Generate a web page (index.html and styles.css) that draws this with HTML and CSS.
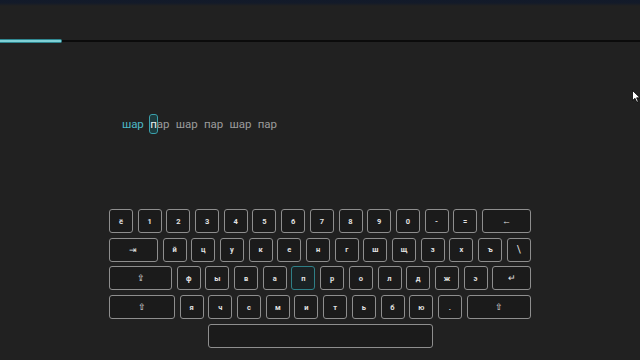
FILE: index.html
```html
<!DOCTYPE html>
<html lang="ru">
<head>
<meta charset="utf-8">
<title>Typing</title>
<link rel="stylesheet" href="styles.css">
</head>
<body>
<div class="app">
  <header class="topbar"></header>
  <div class="progress"><div class="progress-fill" style="width:62px"></div></div>
  <main class="stage">
    <div class="words">
      <span class="word done">шар</span>
      <span class="word"><span class="cur">п</span>ар</span>
      <span class="word">шар</span>
      <span class="word">пар</span>
      <span class="word">шар</span>
      <span class="word">пар</span>
    </div>
    <div class="keyboard">
      <div class="row">
        <div class="key">ё</div><div class="key">1</div><div class="key">2</div><div class="key">3</div><div class="key">4</div><div class="key">5</div><div class="key">6</div><div class="key">7</div><div class="key">8</div><div class="key">9</div><div class="key">0</div><div class="key">-</div><div class="key">=</div><div class="key k-back k-sym">←</div>
      </div>
      <div class="row">
        <div class="key k-tab k-sym">⇥</div><div class="key">й</div><div class="key">ц</div><div class="key">у</div><div class="key">к</div><div class="key">е</div><div class="key">н</div><div class="key">г</div><div class="key">ш</div><div class="key">щ</div><div class="key">з</div><div class="key">х</div><div class="key">ъ</div><div class="key k-slash">\</div>
      </div>
      <div class="row">
        <div class="key k-caps k-sym">⇪</div><div class="key">ф</div><div class="key">ы</div><div class="key">в</div><div class="key">а</div><div class="key active">п</div><div class="key">р</div><div class="key">о</div><div class="key">л</div><div class="key">д</div><div class="key">ж</div><div class="key">э</div><div class="key k-enter k-sym">↵</div>
      </div>
      <div class="row">
        <div class="key k-lshift k-sym">⇧</div><div class="key">я</div><div class="key">ч</div><div class="key">с</div><div class="key">м</div><div class="key">и</div><div class="key">т</div><div class="key">ь</div><div class="key">б</div><div class="key">ю</div><div class="key">.</div><div class="key k-rshift k-sym">⇧</div>
      </div>
      <div class="row row-space">
        <div class="key k-space"></div>
      </div>
    </div>
  </main>
  <svg class="pointer" width="9" height="13" viewBox="0 0 9 13"><path d="M0.5 0.5 L0.5 10.5 L3 8.3 L4.8 12.3 L6.3 11.6 L4.6 7.8 L8 7.8 Z" fill="#fff" stroke="#000" stroke-width="0.8"/></svg>
</div>
</body>
</html>
```
FILE: styles.css
```css
html, body {
  margin: 0;
  padding: 0;
  background: #212121;
}
.app {
  position: relative;
  width: 640px;
  height: 360px;
  overflow: hidden;
  font-family: Roboto, "Noto Sans", sans-serif;
}
.topbar {
  height: 40px;
  background: linear-gradient(to bottom, #121a2a 0px, #141b29 3px, #212121 6px, #212121 100%);
}
.progress {
  position: relative;
  height: 2px;
  background: #0b0b0b;
}
.progress-fill {
  position: absolute;
  left: 0;
  top: -1px;
  height: 4px;
  box-sizing: border-box;
  background: #7fd0d6;
  border: 1px solid #2f8790;
  border-left: none;
  border-radius: 0 2px 2px 0;
}
.stage {
  display: flex;
  flex-direction: column;
  align-items: center;
}
.words {
  align-self: flex-start;
  margin-left: 122px;
  margin-top: 74px;
  display: flex;
  gap: 6.5px;
  font-size: 11.5px;
  letter-spacing: -0.1px;
  line-height: 16px;
  color: #9c9c9c;
  height: 16px;
}
.word.done {
  color: #4db8c6;
}
.cur {
  display: inline-block;
  color: #f0f0f0;
  background: #1d3b3e;
  outline: 1px solid #3aa0ac;
  border-radius: 2px;
  padding: 1px 0;
  margin: -1px 0;
}
.keyboard {
  margin-top: 77px;
  width: 422px;
  display: flex;
  flex-direction: column;
  gap: 4.7px;
}
.row {
  display: flex;
  gap: 4.7px;
}
.row-space {
  justify-content: center;
}
.key {
  box-sizing: border-box;
  width: 24px;
  height: 24px;
  flex: none;
  border: 1.4px solid #8e8e8e;
  border-radius: 3px;
  background: #1b1b1b;
  color: #e2e2e2;
  font-size: 7.5px;
  font-weight: 700;
  display: flex;
  align-items: center;
  justify-content: center;
}
.key.active {
  border-color: #2f7f86;
  background: #1a2224;
}
.k-sym { font-size: 9px; font-weight: 400; }
.k-back { width: 48.9px; }
.k-tab { width: 48.9px; }
.k-slash { font-weight: 400; font-size: 10px; }
.k-caps { width: 63px; }
.k-enter { width: 38.6px; }
.k-lshift { width: 66px; }
.k-rshift { width: 64.3px; }
.k-space { width: 225px; }
.pointer {
  position: absolute;
  left: 632px;
  top: 90px;
}
```
